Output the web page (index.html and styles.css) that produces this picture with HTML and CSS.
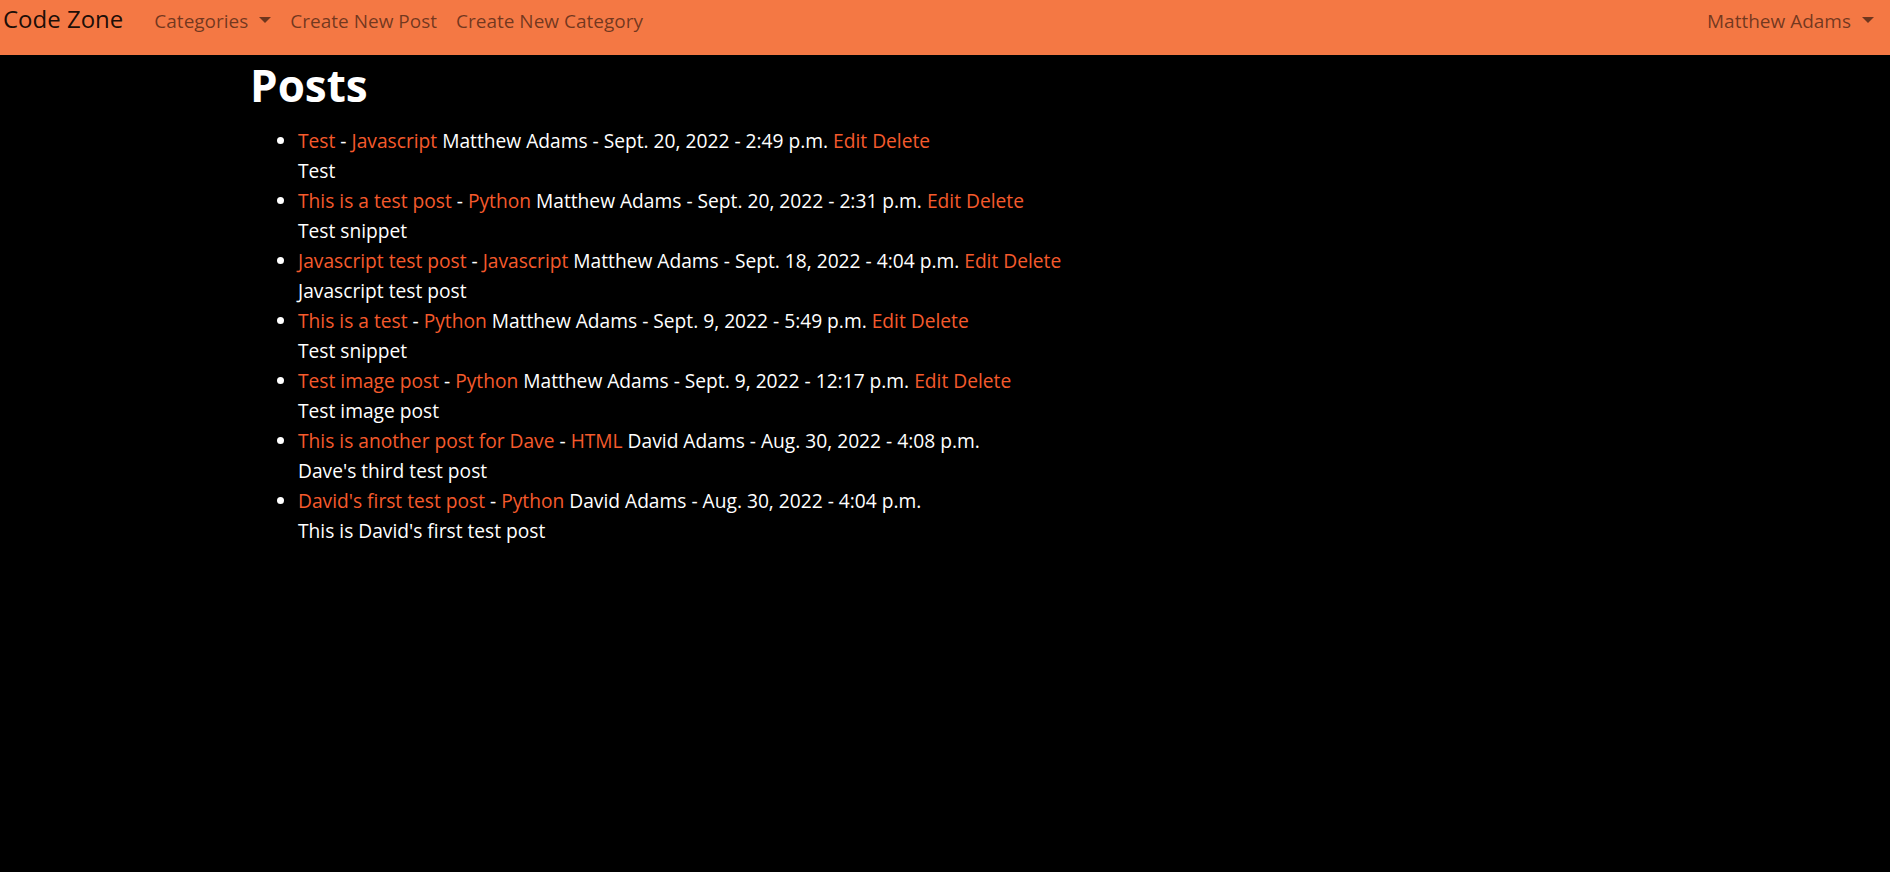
FILE: index.html
```html
<!DOCTYPE html>
<html lang="en">
<head>
<meta charset="utf-8">
<title>Code Zone</title>
<link rel="stylesheet" href="styles.css">
</head>
<body>
<nav class="navbar">
  <a class="brand" href="#">Code Zone</a>
  <ul class="nav-left">
    <li><a class="nav-link dropdown" href="#">Categories</a></li>
    <li><a class="nav-link" href="#">Create New Post</a></li>
    <li><a class="nav-link" href="#">Create New Category</a></li>
  </ul>
  <ul class="nav-right">
    <li><a class="nav-link dropdown" href="#">Matthew Adams</a></li>
  </ul>
</nav>
<main class="container">
  <h1 class="title">Posts</h1>
  <ul class="posts">
    <li><a href="#">Test</a> - <a href="#">Javascript</a> Matthew Adams - Sept. 20, 2022 - 2:49 p.m. <a href="#">Edit</a> <a href="#">Delete</a><br>Test</li>
    <li><a href="#">This is a test post</a> - <a href="#">Python</a> Matthew Adams - Sept. 20, 2022 - 2:31 p.m. <a href="#">Edit</a> <a href="#">Delete</a><br>Test snippet</li>
    <li><a href="#">Javascript test post</a> - <a href="#">Javascript</a> Matthew Adams - Sept. 18, 2022 - 4:04 p.m. <a href="#">Edit</a> <a href="#">Delete</a><br>Javascript test post</li>
    <li><a href="#">This is a test</a> - <a href="#">Python</a> Matthew Adams - Sept. 9, 2022 - 5:49 p.m. <a href="#">Edit</a> <a href="#">Delete</a><br>Test snippet</li>
    <li><a href="#">Test image post</a> - <a href="#">Python</a> Matthew Adams - Sept. 9, 2022 - 12:17 p.m. <a href="#">Edit</a> <a href="#">Delete</a><br>Test image post</li>
    <li><a href="#">This is another post for Dave</a> - <a href="#">HTML</a> David Adams - Aug. 30, 2022 - 4:08 p.m.<br>Dave's third test post</li>
    <li><a href="#">David's first test post</a> - <a href="#">Python</a> David Adams - Aug. 30, 2022 - 4:04 p.m.<br>This is David's first test post</li>
  </ul>
</main>
</body>
</html>
```

FILE: styles.css
```css
html, body {
  margin: 0;
  padding: 0;
}
body {
  background: #000;
  color: #fff;
  font-family: "Open Sans", "Noto Sans", sans-serif;
  font-size: 19.2px;
  line-height: 30px;
}
a {
  text-decoration: none;
}
.navbar {
  display: flex;
  align-items: baseline;
  height: 55px;
  background: #f47844;
  padding: 4px 16px 0 3px;
  box-sizing: border-box;
}
.brand {
  color: rgba(0, 0, 0, 0.9);
  font-size: 24px;
  line-height: 30px;
  margin-right: 31px;
  white-space: nowrap;
}
.nav-left, .nav-right {
  display: flex;
  align-items: baseline;
  list-style: none;
  margin: 0;
  padding: 0;
  gap: 19px;
}
.nav-right {
  margin-left: auto;
}
.nav-link {
  color: rgba(0, 0, 0, 0.55);
  font-size: 19px;
  line-height: 30px;
  white-space: nowrap;
}
.dropdown::after {
  content: "";
  display: inline-block;
  margin-left: 11px;
  vertical-align: 0.255em;
  border-top: 6px solid rgba(0, 0, 0, 0.55);
  border-left: 6px solid transparent;
  border-right: 6px solid transparent;
}
.container {
  padding: 0 0 0 250px;
}
.title {
  margin: 0;
  padding-top: 4px;
  font-size: 44px;
  line-height: 52px;
  font-weight: 700;
}
.posts {
  margin: 15px 0 0;
  padding-left: 48px;
}
.posts a {
  color: #f55a2c;
}
```
